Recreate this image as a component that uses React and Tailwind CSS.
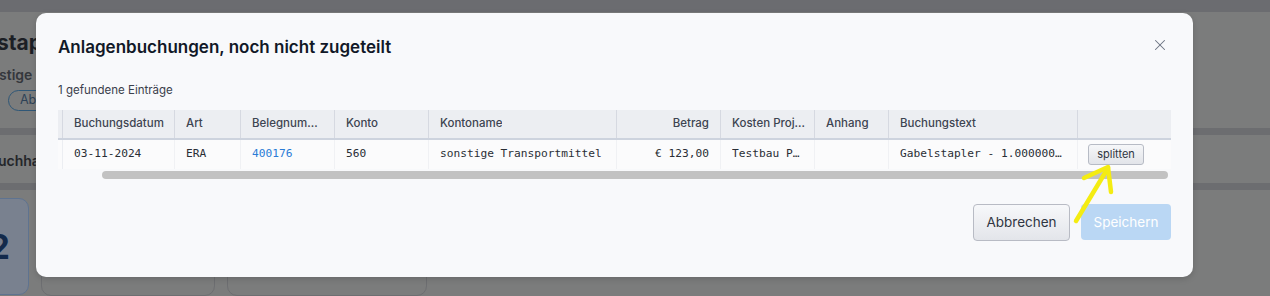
import React from 'react';
import { X } from 'lucide-react';

const columns = [
  { key: 'pin', label: '' },
  { key: 'datum', label: 'Buchungsdatum', pr: 'pr-[2px]' },
  { key: 'art', label: 'Art' },
  { key: 'beleg', label: 'Belegnummer' },
  { key: 'konto', label: 'Konto' },
  { key: 'kontoname', label: 'Kontoname' },
  { key: 'betrag', label: 'Betrag', right: true },
  { key: 'kosten', label: 'Kosten Projekt', pr: 'pr-[5px]' },
  { key: 'anhang', label: 'Anhang' },
  { key: 'text', label: 'Buchungstext' },
  { key: 'action', label: '' },
];

const gridCols =
  'grid grid-cols-[5px_112px_66px_94px_94px_188px_104px_94px_74px_189px_93px]';

const row = {
  datum: '03-11-2024',
  art: 'ERA',
  beleg: '400176',
  konto: '560',
  kontoname: 'sonstige Transportmittel',
  betrag: '€ 123,00',
  kosten: 'Testbau Projekt Nord',
  anhang: '',
  text: 'Gabelstapler - 1.0000000 Stück',
};

const BackgroundPage = () => (
  <div className="flex flex-col">
    <div className="h-[12px] bg-[#6b6c70]" />
    <div className="h-[116px] pt-[17px]">
      <div className="ml-[-3px] whitespace-nowrap text-[21px] font-bold leading-[28px] text-[#1c1f25]">
        stapler
      </div>
      <div className="ml-[-1px] mt-[9px] whitespace-nowrap text-[14px] font-semibold leading-[18px] text-[#34373c]">
        stige Transportmittel
      </div>
      <div className="ml-[8px] mt-[6px] flex h-[21px] w-[90px] items-center rounded-full border-[1.5px] border-[#2f5777] pl-[11px] text-[12.5px] text-[#2e4257]">
        Abrechnung
      </div>
    </div>
    <div className="h-[7px] bg-[#6c6d70]" />
    <div className="flex h-[48px] items-center pt-[2px]">
      <div className="ml-[-2px] whitespace-nowrap text-[14px] font-semibold text-[#24262a]">
        uchhaltung
      </div>
    </div>
    <div className="h-[7px] bg-[#6c6d70]" />
    <div className="flex gap-3 pt-[8px]">
      <div className="ml-[-20px] flex h-[97px] w-[49px] items-center justify-end rounded-[10px] border border-[#5e7390] bg-[#79818f] pr-[18px] text-[34px] font-bold leading-none text-[#132a4b]">
        2
      </div>
      <div className="h-[98px] w-[174px] rounded-[10px] border border-[#6d6e71]" />
      <div className="h-[98px] w-[200px] rounded-[10px] border border-[#6d6e71]" />
    </div>
  </div>
);

const Modal = () => (
  <div className="absolute left-[36px] top-[13px] flex h-[264px] w-[1157px] flex-col rounded-[10px] bg-[#f8f9fb] px-[22px] pt-[22px] shadow-[0_2px_6px_rgba(0,0,0,0.15)]">
    <div className="flex items-center justify-between">
      <h2 className="text-[17px] font-semibold leading-[24px] text-[#111827]">
        Anlagenbuchungen, noch nicht zugeteilt
      </h2>
      <button className="mb-[4px] mr-[2px] text-[#6b7280]">
        <X size={18} strokeWidth={1.4} />
      </button>
    </div>

    <div className="mt-[23px] text-[11.5px] leading-[16px] text-[#3b404b]">1 gefundene Einträge</div>

    <div className="mt-[12px]">
      <div className={`${gridCols} h-[30px] border-b-2 border-[#cdd3de] bg-[#eceef2]`}>
        {columns.map((c, i) => (
          <div
            key={c.key}
            className={`flex min-w-0 items-center text-[11.5px] font-medium text-[#3d4451] ${
              i < columns.length - 1 ? 'border-r border-[#d6d9e1]' : ''
            } ${c.right ? 'justify-end' : ''} ${
              i === 0 ? 'px-0' : `pl-[11px] ${c.pr || 'pr-[11px]'}`
            }`}
          >
            <span className="truncate">{c.label}</span>
          </div>
        ))}
      </div>

      <div className={`${gridCols} h-[29px] bg-[#fbfbfc] font-['DejaVu_Sans_Mono',monospace] text-[11.2px] text-[#2a2e35]`}>
        <div className="border-r border-[#eceef2]" />
        <div className="flex items-center border-r border-[#f0f1f4] px-[11px]">{row.datum}</div>
        <div className="flex items-center border-r border-[#f0f1f4] px-[11px]">{row.art}</div>
        <div className="flex items-center border-r border-[#f0f1f4] px-[11px] text-[#2b7bd6]">{row.beleg}</div>
        <div className="flex items-center border-r border-[#f0f1f4] px-[11px]">{row.konto}</div>
        <div className="flex min-w-0 items-center border-r border-[#f0f1f4] px-[11px]">
          <span className="truncate">{row.kontoname}</span>
        </div>
        <div className="flex items-center justify-end border-r border-[#f0f1f4] px-[11px]">{row.betrag}</div>
        <div className="flex min-w-0 items-center border-r border-[#f0f1f4] px-[11px]">
          <span className="truncate">{row.kosten}</span>
        </div>
        <div className="flex items-center border-r border-[#f0f1f4] px-[11px]">{row.anhang}</div>
        <div className="flex min-w-0 items-center border-r border-[#f0f1f4] px-[11px]">
          <span className="truncate">{row.text}</span>
        </div>
        <div className="flex items-center pl-[10px]">
          <button className="flex h-[21px] w-[56px] items-center justify-center rounded-[3px] border border-[#b7bbc5] bg-gradient-to-b from-[#f6f7f9] to-[#e2e4e9] font-['Inter',sans-serif] text-[11px] text-[#2f3540]">
            splitten
          </button>
        </div>
      </div>

      <div className="mt-[2px] pl-[44px] pr-[3px]">
        <div className="h-[8px] rounded-full bg-[#c2c2c2]" />
      </div>
    </div>

    <div className="mt-[25px] flex justify-end gap-[11px]">
      <button className="h-[37px] w-[97px] rounded-[4px] border border-[#b8bbc4] bg-gradient-to-b from-[#f7f8fa] to-[#e3e5ea] text-[13.5px] text-[#2f3542]">
        Abbrechen
      </button>
      <button className="h-[36px] w-[90px] rounded-[4px] bg-[#bad7f4] text-[13.5px] text-white">
        Speichern
      </button>
    </div>
  </div>
);

export default function App() {
  return (
    <div className="relative h-[296px] w-[1270px] overflow-hidden bg-[#7b7c7c] font-['Inter','Liberation_Sans',sans-serif]">
      <BackgroundPage />
      <div className="absolute right-0 top-[128px] h-[7px] w-[77px] bg-[#6c6d70]" />
      <div className="absolute right-0 top-[183px] h-[7px] w-[77px] bg-[#6c6d70]" />
      <Modal />
      {/* annotation arrow */}
      <svg className="pointer-events-none absolute left-0 top-0" width="1270" height="296">
        <g stroke="#f4ec12" strokeWidth="4.5" strokeLinecap="round" strokeLinejoin="round" fill="none">
          <path d="M1076 221 L1108 168" />
          <path d="M1084 178 L1108 167 L1111 192" />
        </g>
      </svg>
    </div>
  );
}
